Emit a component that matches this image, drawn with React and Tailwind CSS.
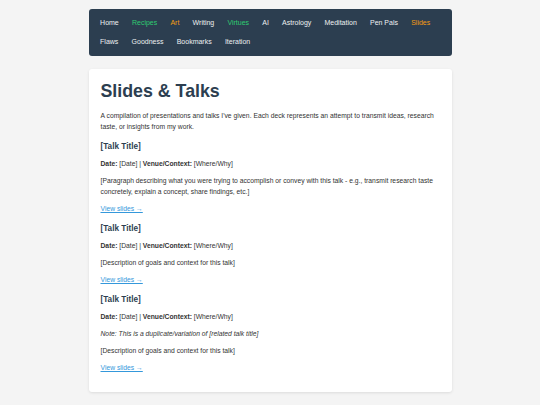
const navRow1 = [
    { label: 'Home', color: 'text-[#ecf0f1]' },
    { label: 'Recipes', color: 'text-[#2ecc71]' },
    { label: 'Art', color: 'text-[#f39c12]' },
    { label: 'Writing', color: 'text-[#ecf0f1]' },
    { label: 'Virtues', color: 'text-[#2ecc71]' },
    { label: 'AI', color: 'text-[#ecf0f1]' },
    { label: 'Astrology', color: 'text-[#ecf0f1]' },
    { label: 'Meditation', color: 'text-[#ecf0f1]' },
    { label: 'Pen Pals', color: 'text-[#ecf0f1]' },
    { label: 'Slides', color: 'text-[#f39c12]' },
];

const navRow2 = ['Flaws', 'Goodness', 'Bookmarks', 'Iteration'];

function Talk({ note, desc }) {
    return (
        <>
            <h3 className="mt-[10px] mb-[6px] text-[8.2px] font-bold leading-[10px] text-[#2c3e50]">
                [Talk Title]
            </h3>
            <p className="my-[6px]">
                <strong>Date:</strong> [Date] | <strong>Venue/Context:</strong> [Where/Why]
            </p>
            {note && (
                <p className="my-[6px] italic">
                    Note: This is a duplicate/variation of [related talk title]
                </p>
            )}
            <p className="my-[6px]">{desc}</p>
            <p className="my-[6px]">
                <a href="#" className="text-[#3498db] underline">
                    View slides →
                </a>
            </p>
        </>
    );
}

export default function App() {
    return (
        <div
            className="min-h-[405px] bg-[#f4f4f4] pt-[9px] pb-[10px] text-[6.75px] leading-[11px] text-[#333]"
            style={{ fontFamily: '"Liberation Sans", Arial, sans-serif' }}
        >
            <div className="mx-auto w-[363px]">
                <nav className="rounded-[3px] bg-[#2c3e50] px-[5px] pt-[4px] pb-[5px] text-[7px]">
                    <div className="flex flex-wrap">
                        {navRow1.map((item) => (
                            <a
                                key={item.label}
                                href="#"
                                className={`px-[6.6px] leading-[19px] ${item.color}`}
                            >
                                {item.label}
                            </a>
                        ))}
                    </div>
                    <div className="flex flex-wrap">
                        {navRow2.map((label) => (
                            <a
                                key={label}
                                href="#"
                                className="px-[6.6px] leading-[19px] text-[#ecf0f1]"
                            >
                                {label}
                            </a>
                        ))}
                    </div>
                </nav>

                <div className="mt-[13px] rounded-[3px] bg-white px-[12px] pt-[12px] pb-[13px] shadow-[0_1px_3px_rgba(0,0,0,0.1)]">
                    <h1 className="mb-[8px] text-[17.8px] font-bold leading-[21px] text-[#2c3e50]">
                        Slides &amp; Talks
                    </h1>
                    <p className="my-[6px]">
                        A compilation of presentations and talks I've given. Each deck represents an
                        attempt to transmit ideas, research taste, or insights from my work.
                    </p>
                    <Talk desc="[Paragraph describing what you were trying to accomplish or convey with this talk - e.g., transmit research taste concretely, explain a concept, share findings, etc.]" />
                    <Talk desc="[Description of goals and context for this talk]" />
                    <Talk note desc="[Description of goals and context for this talk]" />
                </div>
            </div>
        </div>
    );
}
